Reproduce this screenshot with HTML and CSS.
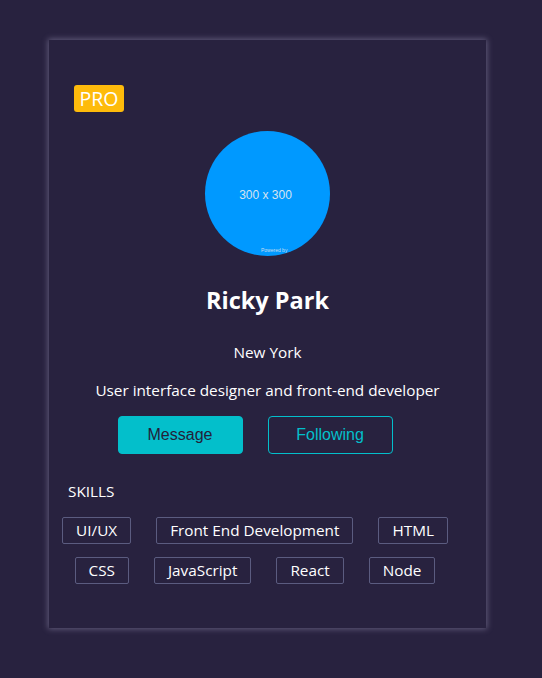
FILE: index.html
```html
<!DOCTYPE html>
<html>
<head>
<meta charset="utf-8">
<link rel="stylesheet" href="styles.css">
</head>
<body>
<div class="card">
  <span class="pro">PRO</span>
  <div class="avatar">
    <span class="avatar-size">300 x 300</span>
    <span class="avatar-powered">Powered by</span>
  </div>
  <h3 class="name">Ricky Park</h3>
  <p class="city">New York</p>
  <p class="desc">User interface designer and front-end developer</p>
  <div class="buttons">
    <button class="btn primary">Message</button>
    <button class="btn ghost">Following</button>
  </div>
  <div class="skills">
    <h6 class="skills-title">SKILLS</h6>
    <ul class="skills-list">
      <li>UI/UX</li>
      <li>Front End Development</li>
      <li>HTML</li>
      <li>CSS</li>
      <li>JavaScript</li>
      <li>React</li>
      <li>Node</li>
    </ul>
  </div>
</div>
</body>
</html>
```
FILE: styles.css
```css
* { box-sizing: border-box; }
html, body { margin: 0; }
body {
  background: #28223f;
  font-family: "Open Sans", "Noto Sans", sans-serif;
  color: #ffffff;
  padding: 40px 0 0 49px;
  min-height: 678px;
}
.card {
  position: relative;
  width: 437px;
  height: 588px;
  background: #28223f;
  box-shadow: 0 0 6px 1px rgba(170, 165, 200, 0.45);
  padding-top: 91px;
  display: flex;
  flex-direction: column;
  align-items: center;
  text-align: center;
}
.pro {
  position: absolute;
  top: 45px;
  left: 25px;
  width: 50px;
  height: 27px;
  background: #febb0b;
  color: #ffffff;
  border-radius: 3px;
  font-size: 19.5px;
  line-height: 27px;
  text-align: center;
}
.avatar {
  position: relative;
  width: 125px;
  height: 125px;
  border-radius: 50%;
  background: #0099ff;
  overflow: hidden;
  flex: none;
  display: flex;
  align-items: center;
  justify-content: center;
}
.avatar-size {
  font-family: "Liberation Sans", Arial, sans-serif;
  font-size: 12px;
  color: #d6e4f0;
  margin: 3px 4px 0 0;
}
.avatar-powered {
  position: absolute;
  left: 56px;
  top: 116px;
  font-family: "Liberation Sans", Arial, sans-serif;
  font-size: 5px;
  color: #c8ddf0;
  white-space: nowrap;
}
.name {
  margin: 29px 0 0;
  font-size: 23.5px;
  line-height: 30px;
  font-weight: 700;
}
.city {
  margin: 27px 0 0;
  font-size: 15.3px;
  line-height: 20px;
}
.desc {
  margin: 18px 0 0;
  font-size: 15.3px;
  line-height: 20px;
}
.buttons {
  margin-top: 16px;
  display: flex;
}
.btn {
  width: 125px;
  height: 38px;
  margin-right: 25px;
  border-radius: 4px;
  border: 1px solid #03bfcb;
  font-family: "Liberation Sans", Arial, sans-serif;
  font-size: 16px;
  padding: 0;
}
.primary {
  background: #03bfcb;
  color: #231e39;
}
.ghost {
  background: transparent;
  color: #03bfcb;
}
.skills {
  align-self: stretch;
  margin-top: 27px;
  text-align: left;
}
.skills-title {
  margin: 0;
  padding-left: 19px;
  font-size: 15.3px;
  line-height: 20px;
  font-weight: 400;
}
.skills-list {
  list-style: none;
  margin: 16px 0 0;
  padding: 0;
  display: flex;
  flex-wrap: wrap;
  justify-content: center;
}
.skills-list li {
  border: 1px solid #5b5c80;
  border-radius: 2px;
  height: 27px;
  padding: 0 13px;
  margin: 0 25px 13px 0;
  font-size: 15.3px;
  line-height: 25px;
}
```
